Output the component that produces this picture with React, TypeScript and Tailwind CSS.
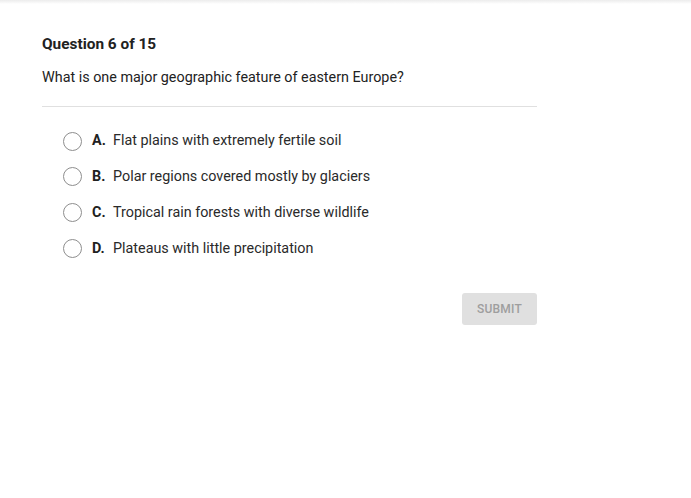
const options = [
  { letter: "A.", text: "Flat plains with extremely fertile soil" },
  { letter: "B.", text: "Polar regions covered mostly by glaciers" },
  { letter: "C.", text: "Tropical rain forests with diverse wildlife" },
  { letter: "D.", text: "Plateaus with little precipitation" },
];

export default function App() {
  return (
    <div className="relative min-h-[498px] w-full bg-white font-['Roboto',sans-serif] text-[#212121]">
      <div className="absolute left-0 right-0 top-0 h-[4px] bg-gradient-to-b from-[#ececec] to-white" />
      <div className="w-[495px] ml-[42px] pt-[34px]">
        <h1 className="text-[15.4px] font-bold leading-[20px]">Question 6 of 15</h1>
        <p className="mt-[15px] text-[14.35px] leading-[18px] text-[#222]">
          What is one major geographic feature of eastern Europe?
        </p>
        <div className="mt-[19px] h-px bg-[#e0e0e0]" />
        <div className="mt-[25px] flex flex-col gap-[17.8px] pl-[21px]">
          {options.map((o) => (
            <label key={o.letter} className="flex items-center h-[18px] cursor-pointer">
              <span className="w-[19px] h-[19px] rounded-full border border-[#8e8e8e] bg-white" />
              <span className="ml-[10px] text-[14.35px] font-bold w-[21px]">{o.letter}</span>
              <span className="text-[14.35px] text-[#2a2a2a]">{o.text}</span>
            </label>
          ))}
        </div>
        <div className="mt-[36px] flex justify-end">
          <button className="w-[75px] h-[32px] rounded-[3px] bg-[#e0e0e0] text-[12px] font-medium text-[#9e9e9e] tracking-[0.2px]">
            SUBMIT
          </button>
        </div>
      </div>
    </div>
  );
}
